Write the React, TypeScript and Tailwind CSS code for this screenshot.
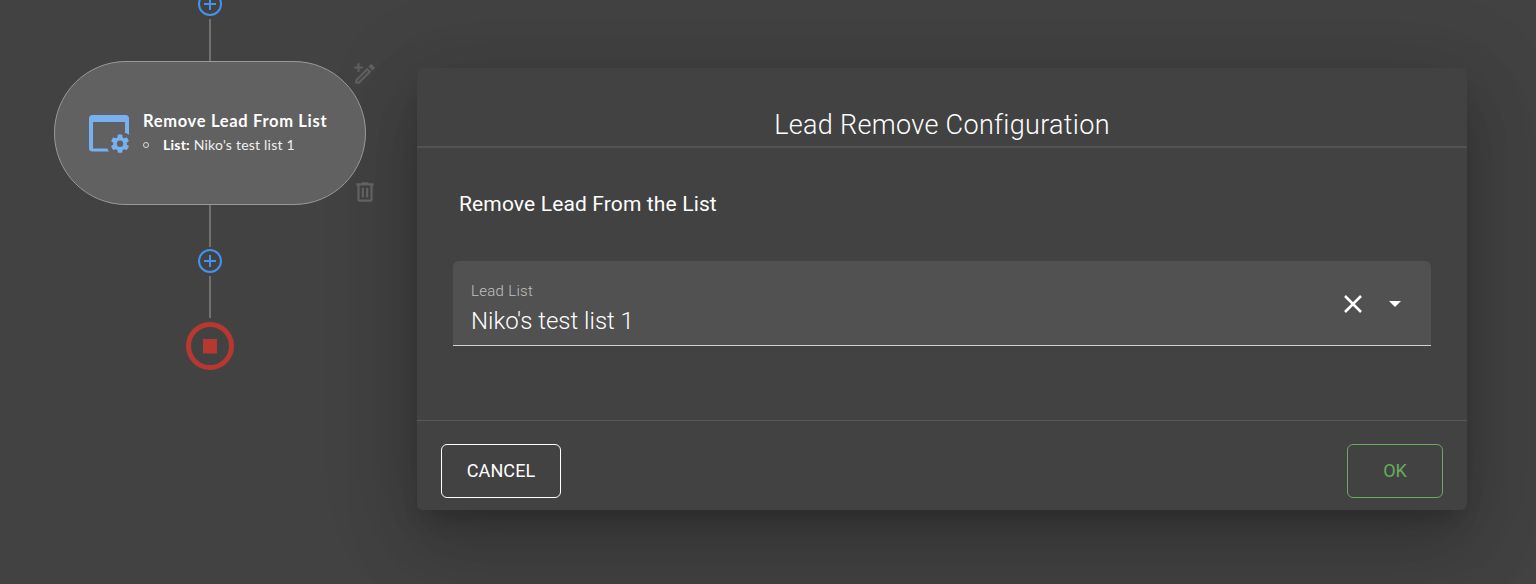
import React from "react";

function AddStep({ className = "" }: { className?: string }) {
  return (
    <svg className={`h-6 w-6 shrink-0 ${className}`} viewBox="0 0 24 24" fill="none" stroke="#4593ee" strokeWidth="2">
      <circle cx="12" cy="12" r="11" />
      <path d="M6 12h12M12 6v12" />
    </svg>
  );
}

function WindowCog() {
  return (
    <svg className="h-10 w-[42px] shrink-0" viewBox="0 0 42 40" fill="#78b0f0">
      <path d="M3.500 1H36.500a3.500 3.500 0 0 1 3.500 3.500V21c-1-.9-2.100-1.600-4-2V8H4V34.500H18.500c.3 1.200.8 2.200 1.600 3H3.500a3.500 3.500 0 0 1-3.500-3.500V4.500a3.500 3.500 0 0 1 3.500-3.500Z" />
      <path
        transform="translate(20.100 18.800) scale(.91)"
        d="M12 15.500A3.500 3.500 0 0 1 8.500 12 3.500 3.500 0 0 1 12 8.500a3.500 3.500 0 0 1 3.500 3.500 3.500 3.500 0 0 1-3.500 3.500m7.430-2.530c.04-.32.07-.64.07-.97s-.03-.66-.07-1l2.110-1.630c.19-.15.24-.42.120-.64l-2-3.460c-.12-.22-.39-.31-.61-.22l-2.490 1c-.52-.39-1.060-.73-1.690-.98l-.37-2.650A.506.506 0 0 0 14 2h-4c-.25 0-.46.18-.5.42l-.37 2.650c-.63.25-1.170.59-1.690.98l-2.490-1c-.22-.09-.49 0-.61.22l-2 3.460c-.13.22-.07.49.12.64L4.570 11c-.04.34-.07.67-.07 1s.03.65.07.97l-2.110 1.660c-.19.15-.25.42-.12.64l2 3.460c.12.22.39.3.61.22l2.490-1.010c.52.4 1.060.74 1.690.99l.37 2.650c.04.24.25.42.5.42h4c.25 0 .46-.18.5-.42l.37-2.650c.63-.26 1.170-.59 1.690-.99l2.490 1.010c.22.08.49 0 .61-.22l2-3.460c.12-.22.07-.49-.12-.64z"
      />
    </svg>
  );
}

function FlowColumn() {
  return (
    <div className="flex w-[420px] shrink-0 flex-col items-center">
      <AddStep className="-mt-2" />
      <div className="mt-[3px] h-[42px] w-[2px] shrink-0 bg-[#707070]" />
      <div className="relative flex h-[144px] w-[312px] shrink-0 rounded-full border border-[#999] bg-[#616161] pl-[34px] pt-[52px]">
        <WindowCog />
        <div className="ml-[12px] whitespace-nowrap font-['Lato',sans-serif] text-white">
          <div className="-mt-[5px] text-[16.500px] font-bold leading-6 tracking-[0.680px]">Remove Lead From List</div>
          <div className="flex items-center text-[14px] leading-6 tracking-[0.220px] text-[#f0f0f0]">
            <span className="mr-[14px] h-[6px] w-[6px] rounded-full border border-[#ddd]" />
            <span><b className="text-white">List:</b> Niko's test list 1</span>
          </div>
        </div>
        <svg className="absolute left-[297px] -top-px h-[26px] w-[26px]" viewBox="0 0 24 24" fill="#5f5f5f">
          <path d="M14.060 9 15 9.940 5.920 19H5v-.92L14.060 9m3.600-6c-.25 0-.51.1-.7.29l-1.830 1.830 3.750 3.750 1.830-1.830c.39-.39.39-1.040 0-1.410l-2.340-2.340A1 1 0 0 0 17.660 3m-3.600 3.190L3 17.250V21h3.750L17.810 9.940 14.060 6.190Z" />
          <path d="M5 2h2v3h3v2H7v3H5V7H2V5h3Z" />
        </svg>
        <svg className="absolute left-[297px] top-[117px] h-[26px] w-[26px]" viewBox="0 0 24 24" fill="#626262">
          <path d="M9 3v1H4v2h1v13a2 2 0 0 0 2 2h10a2 2 0 0 0 2-2V6h1V4h-5V3H9M7 6h10v13H7V6m2 2v9h2V8H9m4 0v9h2V8h-2Z" />
        </svg>
      </div>
      <div className="h-[42px] w-[2px] shrink-0 bg-[#707070]" />
      <AddStep className="mt-[2px]" />
      <div className="mt-[3px] h-[42px] w-[2px] shrink-0 bg-[#707070]" />
      <svg className="mt-1 h-12 w-12 shrink-0" viewBox="0 0 48 48">
        <circle cx="24" cy="24" r="21.500" fill="none" stroke="#b73831" strokeWidth="5" />
        <path d="M17 17h14v14.500H17Z" fill="#b73831" />
      </svg>
    </div>
  );
}

function ConfigDialog() {
  return (
    <section
      role="dialog"
      className="-ml-[3px] mt-[68px] flex h-[442px] w-[1050px] shrink-0 flex-col rounded-md bg-[#424242] text-white shadow-[0_16px_22px_-10px_rgba(0,0,0,0.2),0_36px_72px_4px_rgba(0,0,0,0.14),0_14px_90px_12px_rgba(0,0,0,0.12)]"
    >
      <header className="h-[80px] border-b-2 border-[#535353] pt-[39px] text-center text-[27px] font-light leading-9 tracking-[0.320px]">
        Lead Remove Configuration
      </header>
      <div className="h-[272px] px-9 pt-[40px]">
        <h2 className="pl-[6px] text-[21px] leading-8 tracking-[0.140px]">Remove Lead From the List</h2>
        <div className="mt-[41px] flex h-[85px] items-center rounded-t-md border-b border-[#d0d0d0] bg-[#515151] pl-[18px] pr-[30px]">
          <div className="flex-1 pt-[16px] font-light">
            <div className="text-[15px] leading-5 tracking-[0.300px] text-[#c0c0c0]">Lead List</div>
            <div className="text-[24px] leading-10">Niko's test list 1</div>
          </div>
          <svg className="mr-[27px] mt-[2px] h-[18px] w-[18px]" viewBox="0 0 18 18" stroke="#fff" strokeWidth="2.500">
            <path d="m1 1 16 16M17 1 1 17" />
          </svg>
          <svg className="mt-[2px] h-[6px] w-[12px]" viewBox="0 0 12 6" fill="#fff">
            <path d="M0 0h12L6 6Z" />
          </svg>
        </div>
      </div>
      <footer className="flex flex-1 justify-between border-t border-[#595959] px-6 pt-[23px]">
        <button className="h-[54px] w-[120px] rounded-md border border-white pb-[2px] text-[18px] tracking-[0.100px]">CANCEL</button>
        <button className="h-[54px] w-24 rounded-md border border-[#66ad5b] pb-[2px] text-[18px] text-[#66ad5b]">OK</button>
      </footer>
    </section>
  );
}

export default function App() {
  return (
    <main className="flex h-[584px] w-[1536px] items-start overflow-hidden bg-[#424242] font-['Roboto',sans-serif]">
      <FlowColumn />
      <ConfigDialog />
    </main>
  );
}
